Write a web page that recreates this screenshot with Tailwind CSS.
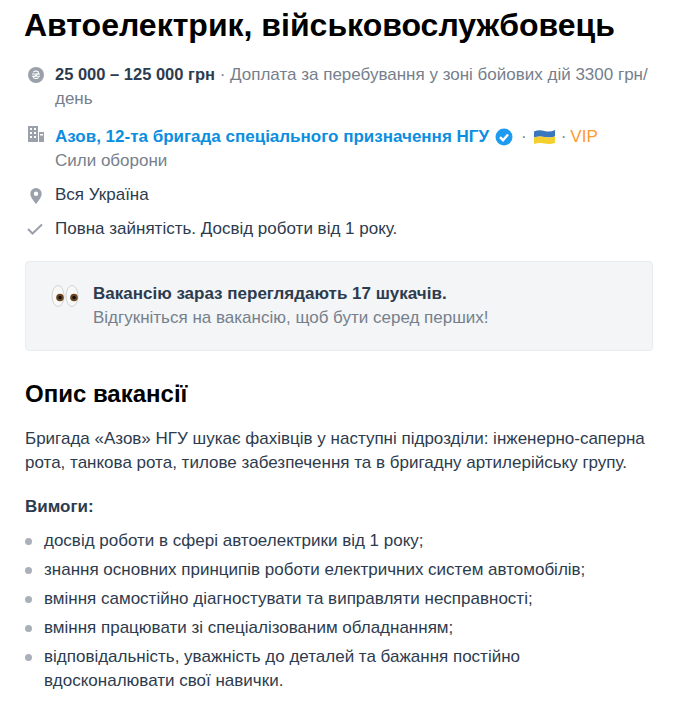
<!DOCTYPE html>
<html lang="uk">
<head>
  <meta charset="UTF-8" />
  <title>Автоелектрик, військовослужбовець</title>
  <script src="https://cdn.jsdelivr.net/npm/@tailwindcss/browser@4"></script>
</head>
<body class="bg-white overflow-hidden h-[712px] font-['Liberation_Sans',sans-serif] text-[17px] leading-6 text-[#2d3b4e]">
  <main class="pl-[25px] pr-[24px]">
    <h1 class="pt-[5px] -ml-[1px] text-[32px] leading-[40px] font-bold text-black whitespace-nowrap">Автоелектрик, військовослужбовець</h1>

    <div class="mt-[17px] flex gap-[11px]">
      <svg class="w-[16px] h-[16px] mt-[5px] ml-[3px] shrink-0" viewBox="0 0 20 20"><circle cx="10" cy="10" r="10" fill="#9aa1aa"/><path d="M6.800 6.500c1-1.900 6.400-2 6.400 .9 0 2.700-6.400 3-6.400 5.500 0 2.100 5.400 2 6.600 .3M5 8.800h10M5 11.600h10" fill="none" stroke="#fff" stroke-width="1.300"/></svg>
      <p class="w-[600px] text-[#76808c]"><b class="text-[#2d3b4e] text-[16.500px]">25 000 – 125 000 грн</b> · Доплата за перебування у зоні бойових дій 3300 грн/ день</p>
    </div>

    <div class="mt-[14px] flex gap-[10px]">
      <svg class="w-[18px] h-[17px] mt-[1px] ml-[2px] shrink-0" viewBox="0 0 18 17"><path fill="#9aa1aa" d="M1 0h10v16H1zM12 6h5v10h-5z"/><path fill="#fff" d="M3 2h2v2H3zM7 2h2v2H7zM3 6h2v2H3zM7 6h2v2H7zM3 10h2v2H3zM7 10h2v2H7zM13 8h3v1.500h-3z"/></svg>
      <div>
        <p class="flex items-center whitespace-nowrap">
          <b class="text-[#0b8ee0]">Азов, 12-та бригада спеціального призначення НГУ</b>
          <svg class="w-[18px] h-[18px] ml-[6px]" viewBox="0 0 18 18"><circle cx="9" cy="9" r="8.500" fill="#1e9bf0"/><path d="M5 9.200l3 3 5-5.700" fill="none" stroke="#fff" stroke-width="2.400"/></svg>
          <span class="ml-[8px] text-[#76808c]">·</span>
          <svg class="w-[23px] h-[18px] ml-[6px]" viewBox="0 0 23 18"><path fill="#3b77bd" d="M1 3.500q5-2 10.500-.5T22 2v6.500q-5 1.500-10.500 .5T1 9.500z"/><path fill="#f3d02f" d="M1 9.500q5-1.500 10.500-.5T22 8.500V15q-5 1.500-10.500 .5T1 16z"/></svg>
          <span class="ml-[5px] text-[#76808c]">·</span>
          <span class="ml-[4px] text-[#ff9a2e]">VIP</span>
        </p>
        <p class="text-[#76808c]">Сили оборони</p>
      </div>
    </div>

    <div class="mt-[10px] flex gap-[10px]">
      <svg class="w-[18px] h-[18px] mt-[4px] ml-[2px] shrink-0" viewBox="0 0 18 18"><path fill="#9aa1aa" fill-rule="evenodd" d="M9 1a5.700 5.700 0 0 0-5.700 5.700C3.300 10.500 9 17 9 17s5.700-6.500 5.700-10.300A5.700 5.700 0 0 0 9 1zm0 3.500a2.200 2.200 0 1 1 0 4.400 2.200 2.200 0 0 1 0-4.400z"/></svg>
      <p>Вся Україна</p>
    </div>

    <div class="mt-[10px] flex gap-[11px]">
      <svg class="w-[18px] h-[18px] ml-[1px] mt-[3px] shrink-0" viewBox="0 0 18 18"><path d="M2 9l4.500 4.500L16 4.500" fill="none" stroke="#9aa1aa" stroke-width="2"/></svg>
      <p>Повна зайнятість. Досвід роботи від 1 року.</p>
    </div>

    <section class="mt-[20px] h-[90px] rounded-[4px] border border-[#e9ecef] bg-[#f3f5f7] flex items-center pl-[25px]">
      <svg class="w-[28px] h-[24px] shrink-0 self-start mt-[22px]" viewBox="0 0 28 24">
        <ellipse cx="7" cy="12" rx="6" ry="10.500" fill="#f8f8f8" stroke="#c9c9c9" stroke-width=".8"/>
        <ellipse cx="21" cy="12" rx="6" ry="10.500" fill="#f8f8f8" stroke="#c9c9c9" stroke-width=".8"/>
        <circle cx="9" cy="13.500" r="3.800" fill="#6b4520"/><circle cx="23" cy="13.500" r="3.800" fill="#6b4520"/>
        <circle cx="9" cy="13.500" r="1.700" fill="#111"/><circle cx="23" cy="13.500" r="1.700" fill="#111"/>
      </svg>
      <div class="ml-[14px]">
        <p class="font-bold">Вакансію зараз переглядають 17 шукачів.</p>
        <p class="text-[#76808c]">Відгукніться на вакансію, щоб бути серед перших!</p>
      </div>
    </section>

    <h2 class="mt-[27px] text-[24px] leading-[32px] font-bold text-black">Опис вакансії</h2>
    <p class="mt-[17px]">Бригада «Азов» НГУ шукає фахівців у наступні підрозділи: інженерно-саперна рота, танкова рота, тилове забезпечення та в бригадну артилерійську групу.</p>
    <p class="mt-[20px] font-bold">Вимоги:</p>
    <ul class="mt-[10px] flex flex-col gap-[5px]">
      <li class="flex"><span class="w-[7px] h-[7px] mt-[9px] mr-[12px] rounded-full bg-[#a9b0b9] shrink-0"></span>досвід роботи в сфері автоелектрики від 1 року;</li>
      <li class="flex"><span class="w-[7px] h-[7px] mt-[9px] mr-[12px] rounded-full bg-[#a9b0b9] shrink-0"></span>знання основних принципів роботи електричних систем автомобілів;</li>
      <li class="flex"><span class="w-[7px] h-[7px] mt-[9px] mr-[12px] rounded-full bg-[#a9b0b9] shrink-0"></span>вміння самостійно діагностувати та виправляти несправності;</li>
      <li class="flex"><span class="w-[7px] h-[7px] mt-[9px] mr-[12px] rounded-full bg-[#a9b0b9] shrink-0"></span>вміння працювати зі спеціалізованим обладнанням;</li>
      <li class="flex"><span class="w-[7px] h-[7px] mt-[9px] mr-[12px] rounded-full bg-[#a9b0b9] shrink-0"></span><span class="w-[520px]">відповідальність, уважність до деталей та бажання постійно вдосконалювати свої навички.</span></li>
    </ul>
  </main>
</body>
</html>
